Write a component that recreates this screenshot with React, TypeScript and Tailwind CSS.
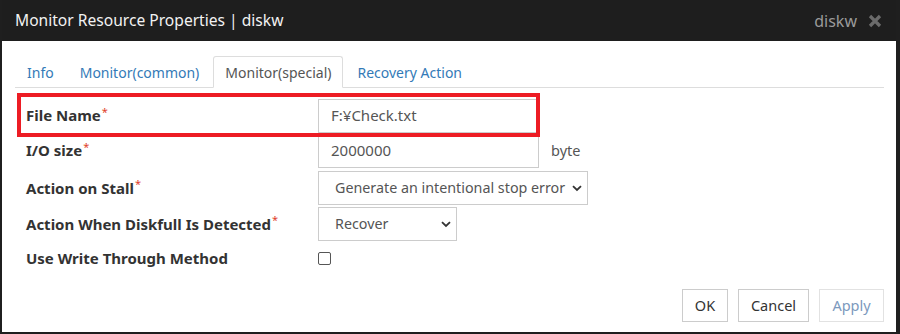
import React from "react";

const Req = () => <sup className="ml-[1px] text-[11px] font-normal text-[#e0402a]">*</sup>;

const Chevron = () => (
  <svg width="10" height="7" viewBox="0 0 10 7" className="ml-auto">
    <path d="M1 1.2 L5 5 L9 1.2" fill="none" stroke="#333" strokeWidth="1.8" />
  </svg>
);

const tabs = ["Info", "Monitor(common)", "Monitor(special)", "Recovery Action"];

export default function App() {
  const font = { fontFamily: '"Noto Sans", "Noto Sans CJK JP", sans-serif' };
  return (
    <div className="w-[900px] h-[334px] bg-white border-l-2 border-r-4 border-b-2 border-[#1f1f1f] flex flex-col overflow-hidden" style={font}>
      {/* title bar */}
      <div className="h-[41px] shrink-0 bg-[#1e1e1e] flex items-center pl-[13px] pr-[14px]">
        <span className="text-[15.6px] text-[#f2f2f2]">Monitor Resource Properties | diskw</span>
        <span className="ml-auto text-[16px] text-[#9a9a9a]">diskw</span>
        <svg width="14" height="14" viewBox="0 0 14 14" className="ml-[11px]">
          <path d="M2 2 L12 12 M12 2 L2 12" stroke="#6b6b6b" strokeWidth="3.2" />
        </svg>
      </div>

      <div className="relative flex-1 flex flex-col pl-[13px] pr-[12px] pt-[15px]">
        {/* tabs */}
        <ul className="flex border-b border-[#dddddd] h-[32px]">
          {tabs.map((t) => {
            const active = t === "Monitor(special)";
            return (
              <li
                key={t}
                className={
                  "mr-[2px] px-[11px] -mb-px flex items-center text-[14px] border rounded-t-[3px] " +
                  (active
                    ? "border-[#dddddd] border-b-white bg-white text-[#555555]"
                    : "border-transparent text-[#337ab7]")
                }
              >
                {t}
              </li>
            );
          })}
        </ul>

        {/* form */}
        <div className="flex flex-col mt-[10px] pl-[11px] text-[15px] text-[#333333]">
          <div className="flex items-center h-[35px]">
            <label className="w-[292px] font-bold">File Name<Req /></label>
            <div className="w-[220px] h-[34px] border border-[#cccccc] flex items-center px-[12px] text-[#555555]">F:¥Check.txt</div>
          </div>
          <div className="flex items-center h-[35px]">
            <label className="w-[292px] font-bold">I/O size<Req /></label>
            <div className="w-[221px] h-[35px] border border-[#cccccc] flex items-center px-[12px] text-[#555555]">2000000</div>
            <span className="ml-[12px] text-[#555555] text-[14.5px]">byte</span>
          </div>
          <div className="flex items-center h-[34px] mt-[3px]">
            <label className="w-[292px] font-bold">Action on Stall<Req /></label>
            <div className="w-[270px] h-[34px] border border-[#cccccc] flex items-center pl-[16px] pr-[5px] text-[14.3px] text-[#555555]">
              <span>Generate an intentional stop error</span>
              <Chevron />
            </div>
          </div>
          <div className="flex items-center h-[34px] mt-[2px]">
            <label className="w-[292px] font-bold">Action When Diskfull Is Detected<Req /></label>
            <div className="w-[139px] h-[34px] border border-[#cccccc] flex items-center pl-[16px] pr-[5px] text-[14.3px] text-[#555555]">
              <span>Recover</span>
              <Chevron />
            </div>
          </div>
          <div className="flex items-center h-[34px]">
            <label className="w-[292px] font-bold">Use Write Through Method</label>
            <span className="w-[13px] h-[13px] border border-[#555555] rounded-[2px] bg-white" />
          </div>
        </div>

        {/* buttons */}
        <div className="flex justify-end gap-[10px] mt-auto mb-[10px] text-[14.5px]">
          <button className="w-[46px] h-[33px] border border-[#cccccc] text-[#333333]">OK</button>
          <button className="w-[71px] h-[33px] border border-[#cccccc] text-[#333333]">Cancel</button>
          <button className="w-[65px] h-[33px] border border-[#e2e2e2] text-[#7c99bd]">Apply</button>
        </div>

        {/* annotation box */}
        <div className="absolute left-[15px] top-[52px] w-[523px] h-[44px] border-[4px] border-[#ed1c24] pointer-events-none" />
      </div>
    </div>
  );
}
